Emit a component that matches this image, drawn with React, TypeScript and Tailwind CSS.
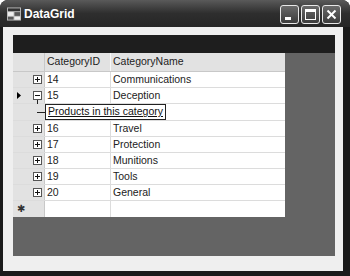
import React from "react";

type Row = { id: string; name: string; current?: boolean; open?: boolean };

const rows: Row[] = [
  { id: "14", name: "Communications" },
  { id: "15", name: "Deception", current: true, open: true },
  { id: "16", name: "Travel" },
  { id: "17", name: "Protection" },
  { id: "18", name: "Munitions" },
  { id: "19", name: "Tools" },
  { id: "20", name: "General" },
];

function ExpandBox({ open }: { open?: boolean }) {
  return (
    <svg width="9" height="9" viewBox="0 0 9 9" className="block">
      <rect x="0.5" y="0.5" width="8" height="8" fill="#fff" stroke="#555" />
      <line x1="2" y1="4.5" x2="7" y2="4.5" stroke="#111" />
      {!open && <line x1="4.5" y1="2" x2="4.5" y2="7" stroke="#111" />}
    </svg>
  );
}

function TitleButton({ kind }: { kind: "min" | "max" | "close" }) {
  return (
    <div className="w-[19px] h-[19px] rounded-[3px] border border-[#e8e8e8] bg-gradient-to-b from-[#6a6a6a] to-[#3c3c3c] flex items-center justify-center">
      <svg width="13" height="13" viewBox="0 0 13 13">
        {kind === "min" && <rect x="2" y="9" width="6" height="3" fill="#fff" />}
        {kind === "max" && (
          <g fill="none" stroke="#fff">
            <rect x="1.5" y="1.5" width="10" height="10" />
            <line x1="1.5" y1="3" x2="11.5" y2="3" strokeWidth="2" />
          </g>
        )}
        {kind === "close" && (
          <g stroke="#fff" strokeWidth="2">
            <line x1="2.5" y1="2.5" x2="10.5" y2="10.5" />
            <line x1="10.5" y1="2.5" x2="2.5" y2="10.5" />
          </g>
        )}
      </svg>
    </div>
  );
}

export default function App() {
  return (
    <div className="w-[350px] h-[276px] bg-white font-['Liberation_Sans',Arial,sans-serif] text-[10.5px] text-[#222]">
      <div className="w-full h-full flex flex-col rounded-t-[8px] overflow-hidden bg-[#1a1a1a]">
        {/* Title bar */}
        <div className="h-[27px] shrink-0 flex items-center pl-[7px] pr-[9px] pt-[1px] bg-gradient-to-b from-[#5a5a5a] via-[#2e2e2e] to-[#262626]">
          <svg width="14" height="14" viewBox="0 0 15 14" className="mr-[3px]">
            <rect x="0" y="0" width="15" height="14" fill="#bbb" />
            <rect x="1" y="1" width="13" height="3" fill="#333" />
            <rect x="1" y="5" width="6" height="4" fill="#eee" />
            <rect x="8" y="5" width="6" height="4" fill="#555" />
            <rect x="1" y="10" width="6" height="3" fill="#555" />
            <rect x="8" y="10" width="6" height="3" fill="#eee" />
          </svg>
          <span className="text-white font-bold text-[12px]">DataGrid</span>
          <div className="ml-auto flex gap-[2px]">
            <TitleButton kind="min" />
            <TitleButton kind="max" />
            <TitleButton kind="close" />
          </div>
        </div>

        {/* Client area */}
        <div className="flex-1 flex ml-[3px] mr-[7px] mb-[5px] bg-[#efefef] pt-[8px] pl-[10px] pr-[8px] pb-[15px]">
          <div className="flex-1 flex flex-col bg-[#646464]">
            <div className="h-[18px] shrink-0 bg-[#1e1e1e]" />
            <div className="w-[272px] bg-white">
              {/* Header */}
              <div className="flex h-[19px] bg-[#e2e2e2] border-b border-[#c8c8c8]">
                <div className="w-[32px] border-r border-[#c8c8c8]" />
                <div className="w-[66px] pl-[2px] flex items-center border-r border-[#f8f8f8]">CategoryID</div>
                <div className="flex-1 pl-[2px] flex items-center">CategoryName</div>
              </div>

              {rows.map((r) => (
                <React.Fragment key={r.id}>
                  <div className="flex h-[16px] border-b border-[#dcdcdc]">
                    <div className="w-[32px] bg-[#e2e2e2] border-r border-[#c8c8c8] flex items-center relative">
                      {r.current && (
                        <svg width="4" height="7" viewBox="0 0 4 7" className="absolute left-[4px] top-[4px]">
                          <polygon points="0,0 4,3.5 0,7" fill="#000" />
                        </svg>
                      )}
                      <div className="absolute left-[20px] top-[3px]">
                        <ExpandBox open={r.open} />
                      </div>
                      {r.open && (
                        <div className="absolute left-[24px] top-[12px] w-[1px] h-[13px] bg-[#222]" />
                      )}
                    </div>
                    <div className="w-[66px] pl-[2px] flex items-center border-r border-[#dcdcdc]">{r.id}</div>
                    <div className="flex-1 pl-[2px] flex items-center">{r.name}</div>
                  </div>
                  {r.open && (
                    <div className="flex h-[17px] border-b border-[#dcdcdc]">
                      <div className="w-[32px] bg-[#e2e2e2] relative">
                        <div className="absolute left-[24px] top-[8px] w-[9px] h-[1px] bg-[#222]" />
                      </div>
                      <div className="flex items-center">
                        <span className="h-[16px] px-[2px] border border-[#222] flex items-center underline underline-offset-[1px] text-[#111]">
                          Products in this category
                        </span>
                      </div>
                    </div>
                  )}
                </React.Fragment>
              ))}

              {/* New row */}
              <div className="flex h-[16px]">
                <div className="w-[32px] bg-[#e2e2e2] border-r border-[#c8c8c8] flex items-center pl-[4px] text-[10px] leading-none text-[#333]">
                  ✱
                </div>
                <div className="w-[66px] border-r border-[#dcdcdc]" />
                <div className="flex-1" />
              </div>
            </div>
          </div>
        </div>
      </div>
    </div>
  );
}
